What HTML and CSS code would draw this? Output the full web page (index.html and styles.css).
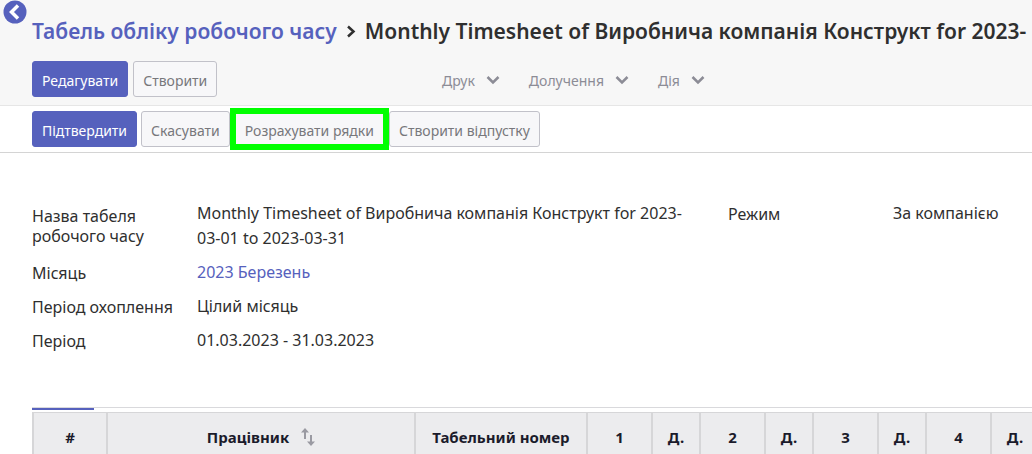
FILE: index.html
```
<!DOCTYPE html>
<html lang="uk">
<head>
  <meta charset="UTF-8">
  <meta name="viewport" content="width=device-width, initial-scale=1.0">
  <title>Табель обліку робочого часу</title>
  <link rel="stylesheet" href="styles.css">
</head>
<body>

  <!-- Sidebar toggle -->
  <button class="sidebar-toggle" aria-label="Назад">
    <svg viewBox="0 0 24 24" width="24" height="24">
      <circle cx="12" cy="12" r="11.5" fill="#5661bd"/>
      <path d="M15 5.500L8.500 12l6.500 6.500" fill="none" stroke="#fff" stroke-width="3.500"/>
    </svg>
  </button>

  <!-- Control panel -->
  <header class="control-panel">
    <h1 class="breadcrumb">
      <a href="#timesheets">Табель обліку робочого часу</a>
      <svg class="breadcrumb-arrow" viewBox="0 0 10 14" width="10" height="14">
        <path d="M2 2.500l5.500 5L2 12.500" fill="none" stroke="#2f2f2f" stroke-width="2.500"/>
      </svg>
      <span class="breadcrumb-current">Monthly Timesheet of Виробнича компанія Конструкт for 2023-03-01 to 2023-03-31</span>
    </h1>
    <div class="toolbar">
      <div class="toolbar-buttons">
        <button class="btn btn-primary">Редагувати</button>
        <button class="btn">Створити</button>
      </div>
      <div class="toolbar-menus">
        <button class="menu-button">Друк
          <svg viewBox="0 0 14 10" width="14" height="10"><path d="M1.500 2L7 7.500 12.500 2" fill="none" stroke="#8c8c96" stroke-width="2.500"/></svg>
        </button>
        <button class="menu-button">Долучення
          <svg viewBox="0 0 14 10" width="14" height="10"><path d="M1.500 2L7 7.500 12.500 2" fill="none" stroke="#8c8c96" stroke-width="2.500"/></svg>
        </button>
        <button class="menu-button">Дія
          <svg viewBox="0 0 14 10" width="14" height="10"><path d="M1.500 2L7 7.500 12.500 2" fill="none" stroke="#8c8c96" stroke-width="2.500"/></svg>
        </button>
      </div>
    </div>
  </header>

  <!-- Status bar -->
  <div class="statusbar">
    <button class="btn btn-primary">Підтвердити</button>
    <button class="btn">Скасувати</button>
    <button class="btn btn-marked">Розрахувати рядки</button>
    <button class="btn">Створити відпустку</button>
  </div>

  <main class="sheet">
    <!-- Timesheet fields -->
    <div class="groups">
      <dl class="group">
        <dt>Назва табеля робочого часу</dt>
        <dd>Monthly Timesheet of Виробнича компанія Конструкт for 2023-03-01 to 2023-03-31</dd>
        <dt>Місяць</dt>
        <dd><a href="#month">2023 Березень</a></dd>
        <dt>Період охоплення</dt>
        <dd>Цілий місяць</dd>
        <dt>Період</dt>
        <dd>01.03.2023 - 31.03.2023</dd>
      </dl>
      <dl class="group">
        <dt>Режим</dt>
        <dd>За компанією</dd>
      </dl>
    </div>

    <!-- Timesheet lines -->
    <div class="tab-line"><span class="tab-active"></span></div>
    <div class="table-wrap">
      <table class="lines">
        <colgroup>
          <col class="col-index">
          <col class="col-employee">
          <col class="col-number">
          <col class="col-day"><col class="col-mark">
          <col class="col-day"><col class="col-mark">
          <col class="col-day"><col class="col-mark">
          <col class="col-day"><col class="col-mark">
        </colgroup>
        <thead>
          <tr>
            <th>#</th>
            <th>
              <span class="sortable">Працівник
                <svg viewBox="0 0 14 18" width="14" height="18">
                  <path d="M4 2v9M10 7v9" stroke="#9a9aa2" stroke-width="2"/>
                  <path d="M0 4.500L4 0l4 4.500zM6 13.500l4 4.500 4-4.500z" fill="#9a9aa2"/>
                </svg>
              </span>
            </th>
            <th>Табельний номер</th>
            <th>1</th>
            <th>Д.</th>
            <th>2</th>
            <th>Д.</th>
            <th>3</th>
            <th>Д.</th>
            <th>4</th>
            <th>Д.</th>
          </tr>
        </thead>
      </table>
    </div>
  </main>

</body>
</html>
```
FILE: styles.css
```
/* General */
* {
  box-sizing: border-box;
}

body {
  margin: 0;
  font-family: "Noto Sans", "Open Sans", sans-serif;
  font-size: 16px;
  color: #2f2f2f;
  background: #fff;
  overflow: hidden;
}

a {
  color: #5661bd;
  text-decoration: none;
}

button {
  font-family: inherit;
  cursor: pointer;
}

/* Sidebar toggle, over the control panel */
.sidebar-toggle {
  position: absolute;
  top: 0;
  left: 3px;
  padding: 0;
  border: none;
  background: none;
}

.sidebar-toggle svg {
  display: block;
}

/* Control panel */
.control-panel {
  padding: 15px 0 8px 32px;
  background: #f7f7f7;
  border-bottom: 1px solid #e6e6e6;
}

.breadcrumb {
  display: flex;
  align-items: center;
  gap: 9px;
  margin: 0 0 14px;
  font-size: 21px;
  font-weight: 600;
  line-height: 32px;
}

.breadcrumb a {
  white-space: nowrap;
}

.breadcrumb-arrow {
  flex: none;
}

/* Only the first line of a long name is shown */
.breadcrumb-current {
  height: 32px;
  overflow: hidden;
}

.toolbar {
  display: flex;
  align-items: center;
}

.toolbar-buttons {
  display: flex;
  gap: 5px;
  flex: 0 0 41%;
}

.toolbar-menus {
  display: flex;
  gap: 29px;
}

/* Buttons */
.btn {
  height: 36px;
  padding: 3px 9px 0;
  border: 1px solid #c1c1c9;
  border-radius: 3px;
  background: #f7f7f9;
  color: #77777c;
  font-size: 14px;
  white-space: nowrap;
}

.btn-primary {
  border-color: #5661bd;
  background: #5661bd;
  color: #fff;
}

.btn-marked {
  height: 42px;
  border: 6px solid #00ff00;
  border-radius: 0;
}

.menu-button {
  display: flex;
  align-items: center;
  gap: 11px;
  padding: 2px 0 0;
  border: none;
  background: none;
  color: #8c8c96;
  font-size: 14px;
}

/* Status bar */
.statusbar {
  display: flex;
  align-items: center;
  height: 47px;
  padding-left: 32px;
  border-bottom: 1px solid #d4d4d4;
}

.statusbar .btn-primary {
  margin-right: 4px;
}

/* Fields */
.sheet {
  padding: 48px 0 0 32px;
}

.groups {
  display: flex;
  gap: 40px;
}

.group {
  display: grid;
  grid-template-columns: 145px 1fr;
  gap: 9px 20px;
  align-content: start;
  flex: 0 0 656px;
  margin: 0;
  line-height: 25px;
}

.group:last-child {
  flex: 1;
}

.group dt {
  align-self: center;
  line-height: 20px;
}

.group dd {
  margin: 0;
}

/* Lines table */
.tab-line {
  height: 5px;
  margin-top: 54px;
  border-top: 1px solid #d9d9dc;
}

.tab-active {
  display: block;
  width: 62px;
  height: 2px;
  background: #5661bd;
}

.table-wrap {
  overflow: hidden;
}

.lines {
  width: 1006px;
  table-layout: fixed;
  border-collapse: collapse;
}

.lines th {
  height: 50px;
  padding: 0;
  border: 2px solid #d6d6d8;
  border-top-width: 1px;
  background: #ececee;
  color: #1b1b2b;
  font-size: 15px;
  font-weight: 700;
}

.col-index {
  width: 74px;
}

.col-employee {
  width: 308px;
}

.col-number {
  width: 172px;
}

.col-day {
  width: 65px;
}

.col-mark {
  width: 48px;
}

.sortable {
  display: inline-flex;
  align-items: center;
  gap: 12px;
}
```
